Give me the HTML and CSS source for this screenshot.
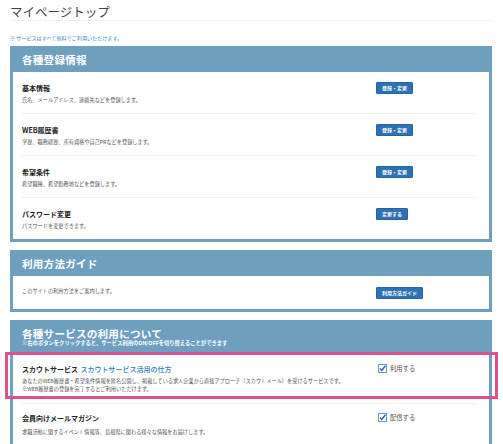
FILE: index.html
```html
<!DOCTYPE html>
<html lang="ja">
<head>
<meta charset="utf-8">
<title>マイページトップ</title>
<link rel="stylesheet" href="styles.css">
</head>
<body>
<div class="page">
  <h1 class="page-title">マイページトップ</h1>
  <p class="note">※ サービスはすべて無料でご利用いただけます。</p>

  <section class="panel">
    <div class="panel-head"><h2>各種登録情報</h2></div>
    <div class="panel-body">
      <div class="row">
        <div class="row-main">
          <div class="row-title">基本情報</div>
          <div class="row-desc">氏名、メールアドレス、連絡先などを登録します。</div>
        </div>
        <div class="row-side"><span class="btn">登録・変更</span></div>
      </div>
      <div class="row">
        <div class="row-main">
          <div class="row-title">WEB履歴書</div>
          <div class="row-desc">学歴、職務経歴、所有資格や自己PRなどを登録します。</div>
        </div>
        <div class="row-side"><span class="btn">登録・変更</span></div>
      </div>
      <div class="row">
        <div class="row-main">
          <div class="row-title">希望条件</div>
          <div class="row-desc">希望職種、希望勤務地などを登録します。</div>
        </div>
        <div class="row-side"><span class="btn">登録・変更</span></div>
      </div>
      <div class="row">
        <div class="row-main">
          <div class="row-title">パスワード変更</div>
          <div class="row-desc">パスワードを変更できます。</div>
        </div>
        <div class="row-side"><span class="btn">変更する</span></div>
      </div>
    </div>
  </section>

  <section class="panel">
    <div class="panel-head"><h2>利用方法ガイド</h2></div>
    <div class="panel-body">
      <div class="row row-single">
        <div class="row-main">
          <div class="row-desc">このサイトの利用方法をご案内します。</div>
        </div>
        <div class="row-side"><span class="btn">利用方法ガイド</span></div>
      </div>
    </div>
  </section>

  <section class="panel panel-last">
    <div class="panel-head">
      <h2>各種サービスの利用について</h2>
      <p class="panel-sub">※右のボタンをクリックすると、サービス利用のON/OFFを切り替えることができます</p>
    </div>
    <div class="panel-body">
      <div class="row row-highlight">
        <div class="row-main">
          <div class="row-title">スカウトサービス <a class="row-link" href="#">スカウトサービス活用の仕方</a></div>
          <div class="row-desc">あなたのWEB履歴書・希望条件情報を匿名公開し、掲載している求人企業から直接アプローチ（スカウトメール）を受けるサービスです。<br>※WEB履歴書の登録を完了するとご利用いただけます。</div>
        </div>
        <div class="row-side">
          <span class="check">
            <svg width="9" height="9" viewBox="0 0 9 9"><rect x="0.5" y="0.5" width="8" height="8" fill="#fff" stroke="#5d9ad6"/><path d="M2 4.4 L3.8 6.4 L7.4 1.8" fill="none" stroke="#2a5f9e" stroke-width="1.4"/></svg>
            <span>利用する</span>
          </span>
        </div>
      </div>
      <div class="row row-mail">
        <div class="row-main">
          <div class="row-title">会員向けメールマガジン</div>
          <div class="row-desc">求職活動に関するイベント情報等、島根県に関わる様々な情報をお届けします。</div>
        </div>
        <div class="row-side">
          <span class="check">
            <svg width="9" height="9" viewBox="0 0 9 9"><rect x="0.5" y="0.5" width="8" height="8" fill="#fff" stroke="#5d9ad6"/><path d="M2 4.4 L3.8 6.4 L7.4 1.8" fill="none" stroke="#2a5f9e" stroke-width="1.4"/></svg>
            <span>配信する</span>
          </span>
        </div>
      </div>
    </div>
  </section>
</div>
</body>
</html>
```

FILE: styles.css
```css
* { box-sizing: border-box; }

html, body {
  margin: 0;
  padding: 0;
  background: #fff;
}

body {
  font-family: "Noto Sans CJK JP", "Noto Sans", sans-serif;
  color: #333;
}

.page {
  width: 482px;
  margin-left: 10px;
}

.page-title {
  margin: 0;
  padding-top: 4px;
  padding-bottom: 1px;
  font-size: 12.5px;
  line-height: 15px;
  font-weight: normal;
  color: #444;
  border-bottom: 1px solid #f0f0f0;
}

.note {
  margin: 13px 0 0;
  font-size: 5.1px;
  line-height: 7px;
  color: #3d8cc6;
}

.panel {
  margin-top: 5px;
  border: 3px solid #6f9fbf;
  background: #fff;
}

.panel + .panel { margin-top: 8px; }

.panel-head {
  background: #6f9fbf;
  padding: 5px 9px 6px;
  color: #fff;
}

.panel-head h2 {
  margin: 0;
  font-size: 10.6px;
  line-height: 12px;
  font-weight: bold;
  letter-spacing: 0.2px;
}

.panel-sub {
  margin: 0;
  font-size: 5.3px;
  line-height: 7px;
  font-weight: bold;
}

.panel-body {
  padding: 0 11px 0 9px;
}

.row {
  display: flex;
  align-items: flex-start;
  padding: 12px 0 10px;
  border-bottom: 1px solid #f1f1f1;
}

.row:last-child { border-bottom: none; }

.row-main {
  flex: 1;
  min-width: 0;
}

.row-title {
  font-size: 7px;
  line-height: 9px;
  font-weight: bold;
  color: #222;
  margin-bottom: 3px;
}

.row-link {
  color: #2f7cc6;
  font-weight: 500;
  text-decoration: none;
  margin-left: 1px;
}

.row-desc {
  font-size: 5.2px;
  line-height: 7px;
  color: #555;
}

.row-single { padding-top: 11px; }

.row-side {
  width: 102px;
  flex: none;
  display: flex;
  align-items: flex-start;
  font-size: 5px;
  line-height: 10px;
}

.btn {
  display: block;
  margin-top: -2px;
  height: 12px;
  padding: 0 5px;
  background: #2e72b6;
  border: 1px solid #2862a0;
  border-radius: 1px;
  color: #fff;
  font-size: 5px;
  line-height: 10px;
  font-weight: bold;
  white-space: nowrap;
}

.row-single .btn { margin-top: 0; }

.row-highlight {
  position: relative;
}

.row-highlight .row-desc { line-height: 8px; }

.row-highlight::after {
  content: "";
  position: absolute;
  top: -1px;
  bottom: 4px;
  left: -17px;
  right: -20px;
  border: 3px solid #d9528d;
  pointer-events: none;
}

.row-mail { padding-top: 10px; }
.row-mail .row-title { margin-bottom: 5px; }

.check {
  display: flex;
  align-items: center;
  gap: 3px;
  margin-left: 2px;
  margin-top: -1px;
  font-size: 6.3px;
  line-height: 9px;
  color: #555;
}

.check svg { display: block; }

.panel-last .panel-body { padding-bottom: 30px; }
```
